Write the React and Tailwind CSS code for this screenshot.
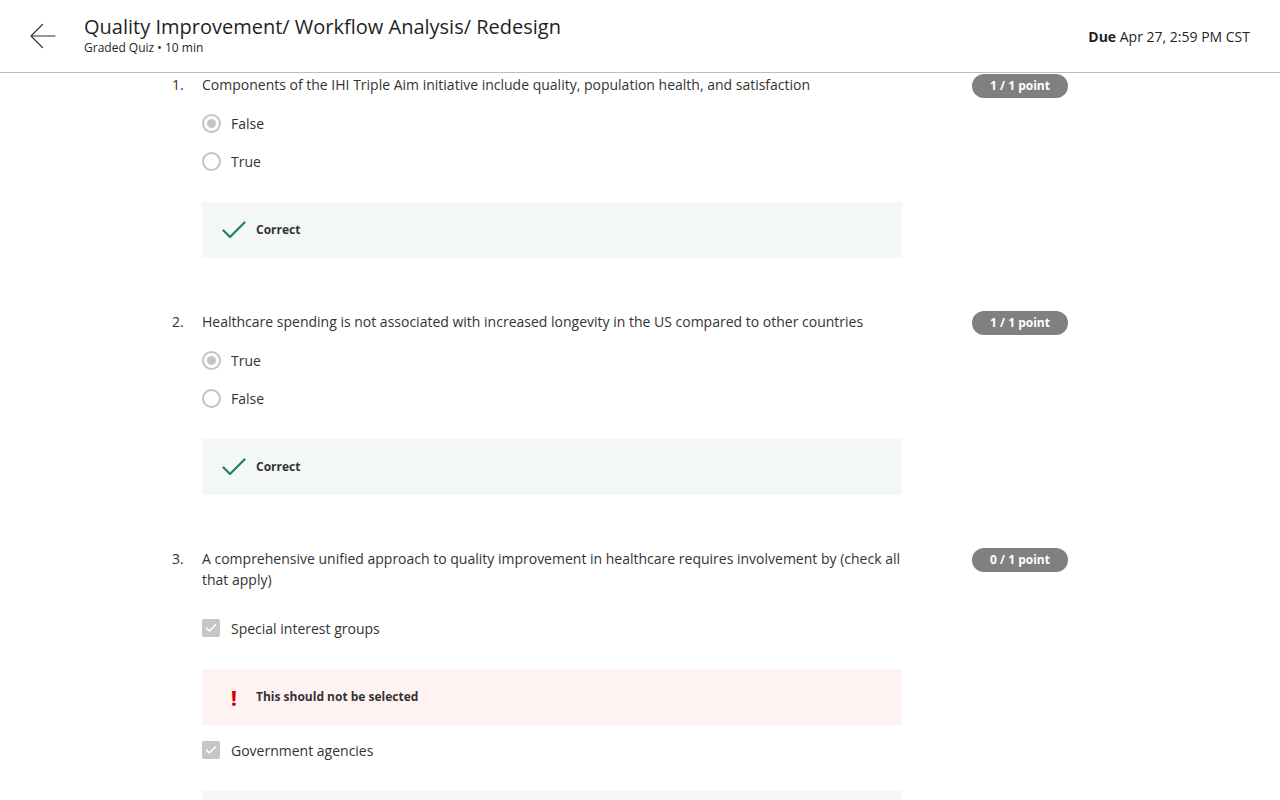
const questions = [
  {
    n: 1,
    text: 'Components of the IHI Triple Aim initiative include quality, population health, and satisfaction',
    score: '1 / 1 point',
    type: 'radio',
    options: [
      { label: 'False', selected: true },
      { label: 'True' }
    ],
    feedback: [{ after: 1, kind: 'correct', text: 'Correct' }]
  },
  {
    n: 2,
    text: 'Healthcare spending is not associated with increased longevity in the US compared to other countries',
    score: '1 / 1 point',
    type: 'radio',
    options: [
      { label: 'True', selected: true },
      { label: 'False' }
    ],
    feedback: [{ after: 1, kind: 'correct', text: 'Correct' }]
  },
  {
    n: 3,
    text: 'A comprehensive unified approach to quality improvement in healthcare requires involvement by (check all that apply)',
    score: '0 / 1 point',
    type: 'check',
    options: [
      { label: 'Special interest groups', selected: true, feedback: { kind: 'wrong', text: 'This should not be selected' } },
      { label: 'Government agencies', selected: true, feedback: { kind: 'correct', text: 'Correct' } }
    ]
  }
]

function Radio({ selected }) {
  return (
    <span className="w-[19px] h-[19px] rounded-full border-2 border-[#c4c4c4] flex items-center justify-center shrink-0">
      {selected && <span className="w-[9px] h-[9px] rounded-full bg-[#c4c4c4]" />}
    </span>
  )
}

function Checkbox() {
  return (
    <span className="w-[18px] h-[18px] rounded-[2px] bg-[#c6c6c6] flex items-center justify-center shrink-0">
      <svg width="12" height="10" viewBox="0 0 12 10" fill="none">
        <path d="M1.5 5.2 L4.5 8 L10.5 1.8" stroke="white" strokeWidth="1.6" strokeLinecap="round" strokeLinejoin="round" />
      </svg>
    </span>
  )
}

function Feedback({ kind, text }) {
  const correct = kind === 'correct'
  return (
    <div className={`h-[56px] w-[700px] flex items-center ${correct ? 'bg-[#f3f8f6]' : 'bg-[#fff2f3]'}`}>
      <div className="w-[54px] flex justify-end pr-[10px]">
        {correct ? (
          <svg width="24" height="20" viewBox="0 0 24 20" fill="none">
            <path d="M1.5 10.5 L8 17 L22.5 2.5" stroke="#1f8354" strokeWidth="2.2" strokeLinecap="round" strokeLinejoin="round" />
          </svg>
        ) : (
          <span className="w-[24px] text-center text-[#d30001] text-[22px] font-bold leading-none">!</span>
        )}
      </div>
      <span className="text-[12px] font-bold text-[#333]">{text}</span>
    </div>
  )
}

function Question({ q }) {
  return (
    <div className="flex mb-[53px]">
      <div className="w-[30px] text-[14px] leading-[21px] text-[#333]">{q.n}.</div>
      <div className="w-[700px]">
        <p className="text-[14px] leading-[21px] text-[#333]">{q.text}</p>
        {q.type === 'radio' ? (
          <div className="mt-[9px]">
            {q.options.map((o) => (
              <div key={o.label} className="h-[38px] flex items-center gap-[10px]">
                <Radio selected={o.selected} />
                <span className="text-[14px] text-[#333]">{o.label}</span>
              </div>
            ))}
            <div className="mt-[22px]">
              <Feedback {...q.feedback[0]} />
            </div>
          </div>
        ) : (
          <div className="mt-[19px]">
            {q.options.map((o) => (
              <div key={o.label} className="mb-[6px]">
                <div className="h-[38px] flex items-center gap-[11px]">
                  <Checkbox />
                  <span className="text-[14px] text-[#333]">{o.label}</span>
                </div>
                <div className="mt-[22px]">
                  <Feedback {...o.feedback} />
                </div>
              </div>
            ))}
          </div>
        )}
      </div>
      <div className="ml-[70px] flex items-start">
        <div className="flex items-center justify-center w-[96px] h-[24px] rounded-full bg-[#808080] text-white text-[12px] font-bold">
          {q.score}
        </div>
      </div>
    </div>
  )
}

export default function App() {
  return (
    <div className="w-[1280px] h-[800px] overflow-hidden bg-white" style={{ fontFamily: '"Open Sans", sans-serif' }}>
      <header className="h-[73px] border-b border-[#bdbdbd] flex items-center pl-[30px] pr-[30px]">
        <svg width="26" height="26" viewBox="0 0 26 26" fill="none" className="shrink-0">
          <path d="M25 13 H1 M12.5 1.5 L1 13 L12.5 24.5" stroke="#333" strokeWidth="1.2" strokeLinecap="round" strokeLinejoin="round" />
        </svg>
        <div className="ml-[28px] flex-1 -mt-[2px]">
          <h1 className="text-[20px] leading-[26px] text-[#1f1f1f]">Quality Improvement/ Workflow Analysis/ Redesign</h1>
          <p className="text-[12px] leading-[16px] text-[#1f1f1f]">Graded Quiz • 10 min</p>
        </div>
        <div className="text-[14px] text-[#1f1f1f]">
          <span className="font-bold">Due</span> Apr 27, 2:59 PM CST
        </div>
      </header>
      <main className="pl-[172px] pt-[1px]">
        {questions.map((q) => (
          <Question key={q.n} q={q} />
        ))}
      </main>
    </div>
  )
}
